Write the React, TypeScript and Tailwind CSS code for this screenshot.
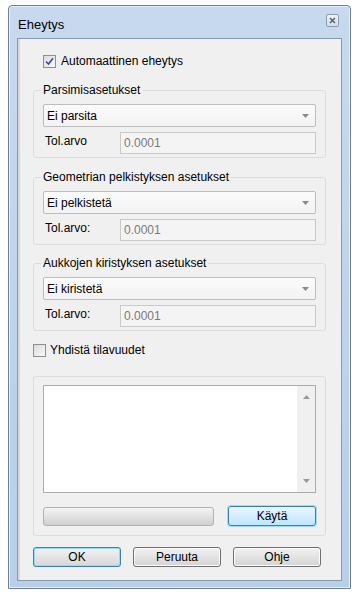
import React from "react";

const font = { fontFamily: '"Liberation Sans", Arial, sans-serif' };

function Combo({ text }: { text: string }) {
  return (
    <div className="flex h-[23px] items-center justify-between rounded-[2px] border border-[#bdbdbd] bg-gradient-to-b from-[#fbfbfb] to-[#f3f3f3] pl-[3px] pr-[6px] text-[12px] leading-[16px] text-black">
      <span>{text}</span>
      <svg width="7" height="4" viewBox="0 0 7 4">
        <path d="M0 0 H7 L3.5 4 Z" fill="#8a8a8a" />
      </svg>
    </div>
  );
}

function TolRow({ label }: { label: string }) {
  return (
    <div className="mt-[5px] flex h-[22px] items-center">
      <span className="mt-[-4px] w-[77px] pl-[2px] text-[12px] leading-[16px] text-black">{label}</span>
      <div className="flex h-[22px] flex-1 items-center border border-[#c9c9c9] bg-[#f4f4f4] pl-[3px] text-[12px] leading-[16px] text-[#7a7a7a]">
        0.0001
      </div>
    </div>
  );
}

function Group({
  label,
  combo,
  tol,
  className,
}: {
  label: string;
  combo: string;
  tol: string;
  className?: string;
}) {
  return (
    <div className={"relative rounded-[3px] border border-[#dcdcdc] px-[9px] pb-[3px] pt-[13px] " + (className || "")}>
      <span className="absolute left-[7px] top-[-9px] bg-[#f0f0f0] px-[2px] text-[12px] leading-[16px] text-black">
        {label}
      </span>
      <Combo text={combo} />
      <TolRow label={tol} />
    </div>
  );
}

function CheckBox({ checked }: { checked?: boolean }) {
  return (
    <div className="flex h-[13px] w-[13px] items-center justify-center border border-[#8e8f8f] bg-gradient-to-br from-[#dcdcdc] to-[#f8f8f8]">
      {checked && (
        <svg width="9" height="9" viewBox="0 0 9 9">
          <path d="M1 4.5 L3.5 7 L8 1.2" fill="none" stroke="#3a4f8a" strokeWidth="1.6" />
        </svg>
      )}
    </div>
  );
}

function Btn({ children, blue, hot }: { children: React.ReactNode; blue?: boolean; hot?: boolean }) {
  return (
    <div
      className={
        "flex h-[20px] items-center justify-center rounded-[3px] border text-[12px] leading-[16px] text-black " +
        (hot
          ? "border-[#3c7fb1] bg-gradient-to-b from-[#eaf6fd] to-[#bee6fd] shadow-[0_0_0_1px_#9fdaf7]"
          : blue
          ? "border-[#3c7fb1] bg-gradient-to-b from-[#f2f2f2] to-[#d7d7d7] shadow-[inset_0_0_0_1px_#93dbf7]"
          : "border-[#707070] bg-gradient-to-b from-[#f2f2f2] to-[#d4d4d4] shadow-[inset_0_0_0_1px_#fbfbfb]")
      }
    >
      {children}
    </div>
  );
}

export default function App() {
  return (
    <div className="h-[600px] w-[360px] bg-white pl-[8px] pt-[5px]" style={font}>
      <div className="flex h-[584px] w-[343px] flex-col rounded-t-[4px] border border-[#6e7f92] bg-gradient-to-b from-[#c6d9ef] via-[#bfd4ec] to-[#b7cfe9] px-[8px] pb-[7px] shadow-[inset_0_0_0_1px_#e6f0fa]">
        <div className="flex h-[32px] items-center justify-between pl-[1px]">
          <span className="mt-[6px] text-[13px] leading-[16px] text-black">Eheytys</span>
          <div className="mr-[3px] mt-[-3px] flex h-[13px] w-[13px] items-center justify-center rounded-[2px] border border-[#8d9db0] bg-gradient-to-b from-[#eef2f7] to-[#d3dde9]">
            <svg width="7" height="7" viewBox="0 0 7 7">
              <path d="M1 1 L6 6 M6 1 L1 6" stroke="#5a6573" strokeWidth="1.6" />
            </svg>
          </div>
        </div>
        <div className="flex flex-1 flex-col border border-[#8a9aab] bg-[#f0f0f0] px-[15px] pt-[14px] shadow-[inset_2px_0_0_#d8d8d8]">
          <div className="flex h-[16px] items-center pl-[10px]">
            <CheckBox checked />
            <span className="ml-[5px] text-[12px] leading-[16px] text-black">Automaattinen eheytys</span>
          </div>
          <Group className="mt-[21px]" label="Parsimisasetukset" combo="Ei parsita" tol="Tol.arvo" />
          <Group className="mt-[19px]" label="Geometrian pelkistyksen asetukset" combo="Ei pelkistetä" tol="Tol.arvo:" />
          <Group className="mt-[18px]" label="Aukkojen kiristyksen asetukset" combo="Ei kiristetä" tol="Tol.arvo:" />
          <div className="mt-[11px] flex h-[16px] items-center">
            <CheckBox />
            <span className="ml-[4px] text-[12px] leading-[16px] text-black">Yhdistä tilavuudet</span>
          </div>
          <div className="mt-[18px] rounded-[3px] border border-[#dcdcdc] px-[9px] pb-[9px] pt-[8px]">
            <div className="flex h-[108px] border border-[#ababab] bg-white">
              <div className="flex-1" />
              <div className="flex w-[18px] flex-col items-center justify-between bg-[#f0f0f0] py-[9px]">
                <svg width="7" height="4" viewBox="0 0 7 4">
                  <path d="M0 4 H7 L3.5 0 Z" fill="#9a9a9a" />
                </svg>
                <svg width="7" height="4" viewBox="0 0 7 4">
                  <path d="M0 0 H7 L3.5 4 Z" fill="#9a9a9a" />
                </svg>
              </div>
            </div>
            <div className="mt-[13px] flex items-center">
              <div className="h-[19px] w-[171px] rounded-[3px] border border-[#b2b2b2] bg-gradient-to-b from-[#f3f3f3] via-[#e2e2e2] to-[#d0d0d0]" />
              <div className="ml-[14px] flex-1">
                <Btn hot>Käytä</Btn>
              </div>
            </div>
          </div>
          <div className="mt-[11px] flex gap-[12px]">
            <div className="w-[88px]">
              <Btn blue>OK</Btn>
            </div>
            <div className="w-[88px]">
              <Btn>Peruuta</Btn>
            </div>
            <div className="w-[88px]">
              <Btn>Ohje</Btn>
            </div>
          </div>
        </div>
      </div>
    </div>
  );
}
